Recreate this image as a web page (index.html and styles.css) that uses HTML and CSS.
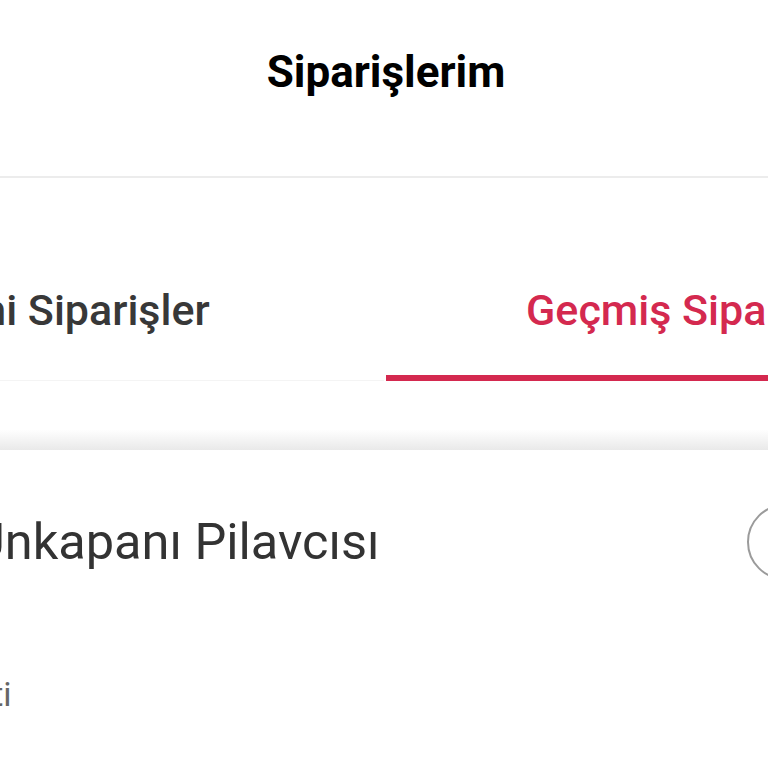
FILE: index.html
```html
<!DOCTYPE html>
<html lang="tr">
<head>
<meta charset="utf-8">
<title>Siparişlerim</title>
<link rel="stylesheet" href="styles.css">
</head>
<body>
<div class="page">
  <header class="topbar">
    <h1 class="title">Siparişlerim</h1>
  </header>
  <nav class="tabs">
    <div class="tab">Yeni Siparişler</div>
    <div class="tab active">Geçmiş Siparişler</div>
  </nav>
  <div class="spacer"></div>
  <section class="order">
    <div class="order-row">
      <div class="order-name">Unkapanı Pilavcısı</div>
      <div class="order-check"></div>
    </div>
    <div class="order-meta">Şti</div>
  </section>
</div>
</body>
</html>
```
FILE: styles.css
```css
html, body {
  margin: 0;
  padding: 0;
  background: #ffffff;
  overflow: hidden;
}
.page {
  width: 1240px;
  margin-left: -236px;
  font-family: Roboto, "Liberation Sans", sans-serif;
}
.topbar {
  height: 176px;
  border-bottom: 2px solid #ececec;
  display: flex;
  justify-content: center;
  align-items: flex-start;
}
.title {
  margin: 0;
  padding-top: 42px;
  padding-left: 4px;
  font-family: Roboto, "Liberation Sans", sans-serif;
  font-weight: 700;
  font-size: 44px;
  color: #000;
  line-height: 60px;
}
.tabs {
  display: grid;
  grid-template-columns: 620px 620px;
  height: 203px;
}
.tab {
  display: flex;
  justify-content: center;
  align-items: flex-start;
  padding-top: 102px;
  font-size: 43px;
  font-weight: 500;
  color: #383838;
  line-height: 60px;
  border-bottom: 1px solid #f4f4f4;
}
.tab:first-child {
  padding-right: 4px;
}
.tab.active {
  color: #d4294f;
  margin-left: 2px;
  border-bottom: 6px solid #d4294f;
}
.spacer {
  height: 69px;
  background: linear-gradient(#ffffff 0%, #ffffff 70%, #e9e9e9 100%);
}
.order {
  padding: 52px 181px 0 208px;
}
.order-row {
  display: flex;
  justify-content: space-between;
  align-items: center;
}
.order-name {
  font-size: 50.5px;
  color: #333;
  line-height: 80px;
}
.order-check {
  width: 72px;
  height: 72px;
  border: 2.5px solid #9b9b9b;
  border-radius: 50%;
}
.order-meta {
  margin-top: 92px;
  font-size: 34px;
  color: #666;
  line-height: 40px;
}
```
